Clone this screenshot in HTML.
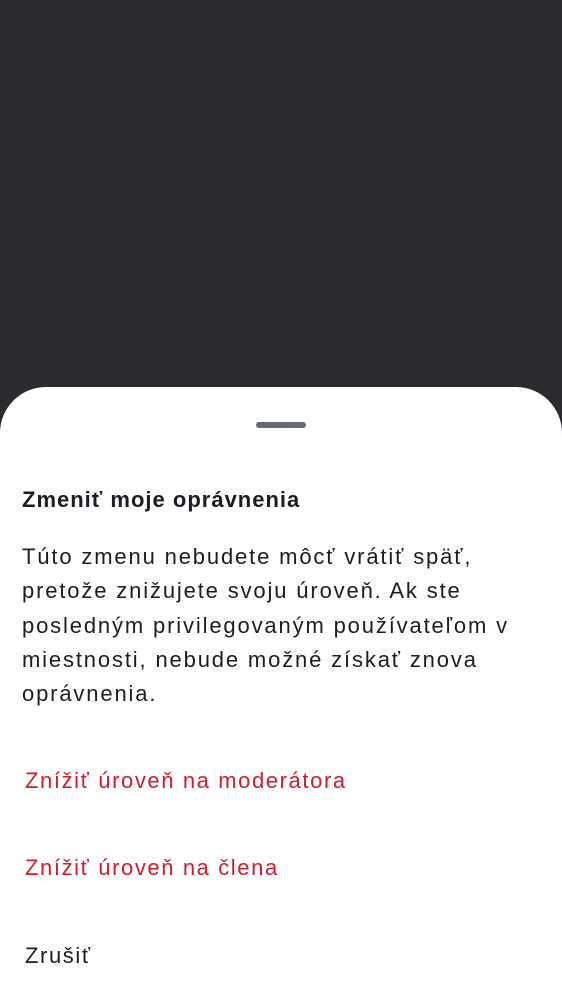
<!DOCTYPE html>
<html><head><meta charset="utf-8"><style>
html,body{margin:0;padding:0;width:562px;height:1000px;overflow:hidden;background:#2a2b2e;font-family:"Liberation Sans",sans-serif;}
.sheet{position:absolute;left:0;top:387px;width:562px;height:613px;background:#fff;border-radius:46px 46px 0 0;}
.handle{position:absolute;left:256px;top:35px;width:50px;height:6px;border-radius:3px;background:#656b73;}
.title{position:absolute;left:22px;top:100px;font-size:22px;color:#1b1d22;font-weight:bold;letter-spacing:1px;}
.body{position:absolute;left:22px;top:153px;width:540px;font-size:22px;line-height:34.3px;color:#1b1d22;letter-spacing:1.85px;white-space:nowrap;}
.btn{position:absolute;left:25px;font-size:22px;letter-spacing:1.6px;}
.red{color:#d31b2c;}
</style></head><body>
<div class="sheet">
<div class="handle"></div>
<div class="title">Zmeniť moje oprávnenia</div>
<div class="body">Túto zmenu nebudete môcť vrátiť späť,<br>pretože znižujete svoju úroveň. Ak ste<br>posledným privilegovaným používateľom v<br>miestnosti, nebude možné získať znova<br>oprávnenia.</div>
<div class="btn red" style="top:381px">Znížiť úroveň na moderátora</div>
<div class="btn red" style="top:468px">Znížiť úroveň na člena</div>
<div class="btn" style="top:556px;color:#1b1d22">Zrušiť</div>
</div>
</body></html>
